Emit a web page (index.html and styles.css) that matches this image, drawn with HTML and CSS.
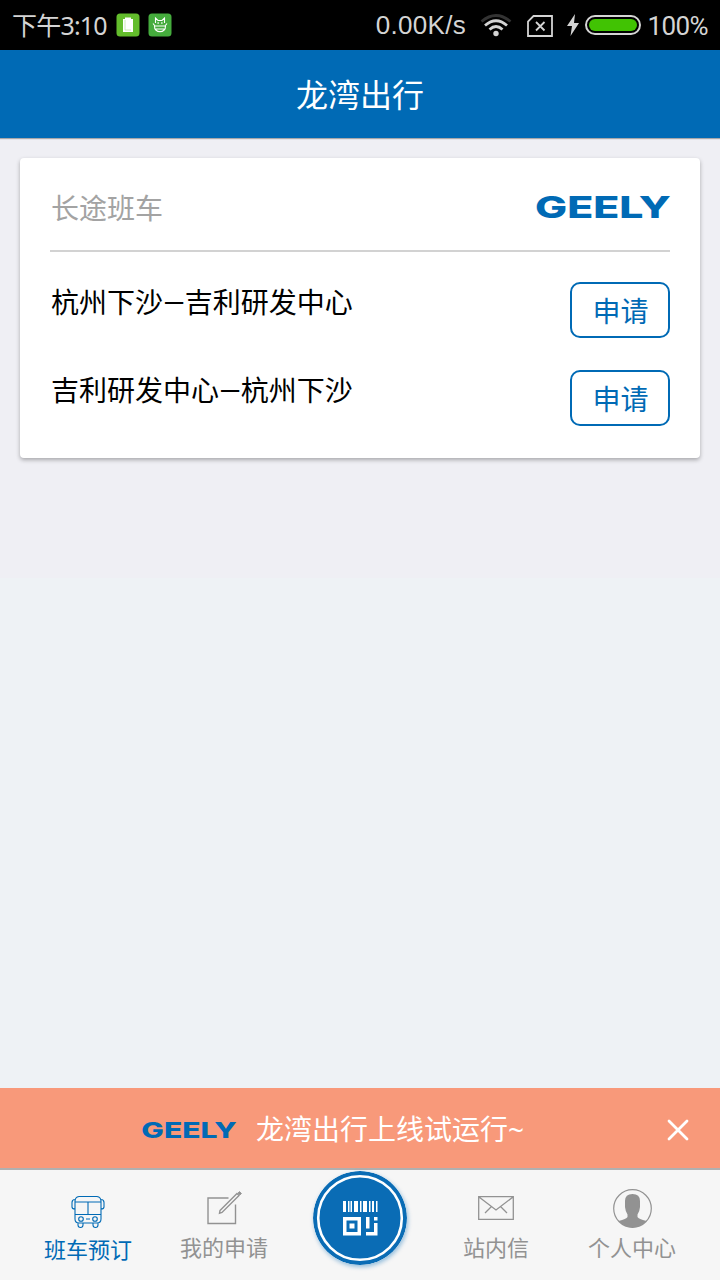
FILE: index.html
```
<!DOCTYPE html><html lang="zh-CN"><head><meta charset="utf-8"/>
<meta name="viewport" content="width=device-width, initial-scale=1.0"/>
<meta name="format-detection" content="telephone=no"/>
<title>龙湾出行</title>
<link rel="stylesheet" href="styles.css">
</head>
<body>

<div class="status">
  <span class="time">下午3:10</span>
  <svg class="app" width="24" height="24" viewBox="0 0 24 24">
    <rect x="0.5" y="0.5" width="23" height="23" rx="3.5" fill="#63bd2c"/>
    <path d="M7 6h2V4.500h6V6h2v13H7z" fill="#fff"/>
    <path d="M9 7v10h6" fill="none" stroke="#bfe5a6" stroke-width="0.8"/>
  </svg>
  <svg class="app" width="24" height="24" viewBox="0 0 24 24">
    <rect x="0.5" y="0.5" width="23" height="23" rx="3.5" fill="#45ac3d"/>
    <path d="M7.500 10V5l2.500 2.500h4L16.500 5v5M5 10.500l2 2.500h10l2-2.500M6.500 13c-.5 7.500 11.500 7.500 11 0M8 16h8" fill="none" stroke="#fff" stroke-width="1.100"/>
    <path d="M9.500 10h1.300M13.200 10h1.300" stroke="#fff" stroke-width="1.300"/>
  </svg>
  <span class="speed">0.00K/s</span>
  <svg class="wifi" width="32" height="24" viewBox="0 0 32 24">
    <g fill="none" stroke-width="2.800">
      <path d="M1.500 7.500Q16-4.500 30.500 7.500" stroke="#333"/>
      <path d="M5 11.500Q16 2 27 11.500M9.500 15.500Q16 9.500 22.500 15.500" stroke="#d4d4d4"/>
    </g>
    <circle cx="16" cy="19.500" r="2.700" fill="#d4d4d4"/>
  </svg>
  <svg class="sim" width="26" height="22" viewBox="0 0 26 22">
    <path d="M6.500 1H25v20H1V6.500zM9 7l8.500 8.500M17.500 7L9 15.500" fill="none" stroke="#d4d4d4" stroke-width="1.800"/>
  </svg>
  <svg class="bolt" width="12" height="22" viewBox="0 0 12 22">
    <path d="M8 0L0 12h5L3.500 22 12 9H7z" fill="#d4d4d4"/>
  </svg>
  <span class="battery"></span>
  <span class="percent">100%</span>
</div>

<h1 class="title">龙湾出行</h1>

<div class="content">
  <div class="card">
    <div class="cardhead">
      <span>长途班车</span>
      <svg class="logo" width="134" height="24" viewBox="0 0 134 24"><text x="-1" y="23" textLength="136" lengthAdjust="spacingAndGlyphs">GEELY</text></svg>
    </div>
    <div class="route">
      <span>杭州下沙—吉利研发中心</span>
      <button class="apply">申请</button>
    </div>
    <div class="route">
      <span>吉利研发中心—杭州下沙</span>
      <button class="apply">申请</button>
    </div>
  </div>
</div>

<div class="notice">
  <svg class="logo" width="94" height="17" viewBox="0 0 134 24"><text x="-1" y="23" textLength="136" lengthAdjust="spacingAndGlyphs">GEELY</text></svg>
  <span>龙湾出行上线试运行<span class="tilde">~</span></span>
  <svg class="close" width="22" height="22" viewBox="0 0 22 22">
    <path d="M2 2l18 18M20 2L2 20" stroke="#fff" stroke-width="2.800" stroke-linecap="round"/>
  </svg>
</div>

<div class="tabs">
  <div class="tab active">
    <svg width="34" height="34" viewBox="0 0 34 34" fill="none" stroke="currentColor" stroke-width="1.100">
      <path d="M8 1.500h18q4 .5 4 5V24q0 4-4 4H8q-4 0-4-4V6.500q0-4.500 4-5zM4 7h26M4 19.500h26M17 7v12.500M4 4.500q-3 0-3 3V12q0 2 3 2M30 4.500q3 0 3 3V12q0 2-3 2M7 28v2q0 2.500 2.500 2.500T12 30v-2M22 28v2q0 2.500 2.500 2.500T27 30v-2M15 24h4"/>
      <circle cx="10" cy="24" r="2.300"/>
      <circle cx="24" cy="24" r="2.300"/>
    </svg>
    <span>班车预订</span>
  </div>
  <div class="tab">
    <svg width="36" height="36" viewBox="0 0 36 36" fill="none" stroke="currentColor" stroke-width="1.400">
      <path d="M22.500 8H2V33.500H29.500V14.500"/>
      <path d="M14 20.500L31 3.500l2 2L16 22.500l-2.500 .8z"/>
      <path d="M32 3l1.500-1.500 2 2L34 5z" fill="currentColor" stroke-width="0.800"/>
    </svg>
    <span>我的申请</span>
  </div>
  <div class="tab">
    <svg class="scan" width="94" height="94" viewBox="0 0 94 94">
      <circle cx="47" cy="47" r="47" fill="#0a6cb5"/>
      <circle cx="47" cy="47" r="41.800" fill="none" stroke="#fff" stroke-width="2.600"/>
      <g fill="#fff">
        <path d="M30 30h3v11h-3zM35 30h1.500v11H35zM37.500 30H39v11h-1.500zM41 30h4v11h-4zM47 30h1.500v11H47zM50 30h4v11h-4zM56 30h1.500v11H56zM59 30h2v11h-2zM63 30h1.500v11H63z"/>
        <path d="M30 46h18v18.500H30zM33.500 49.500v11.500h11V49.500z" fill-rule="evenodd"/>
        <path d="M36.500 52.500h5v5h-5zM53 46h3.500v11.500H53zM61 46h3.500v3.500H61zM61 52h3.500v12.500H53V61h8z"/>
      </g>
    </svg>
  </div>
  <div class="tab">
    <svg width="36" height="36" viewBox="0 0 36 36" fill="none" stroke="currentColor" stroke-width="1.300">
      <path d="M.7 6.700h34.600v22.600H.7zM1 7l17 13L35 7M13.500 16.500L7 23M22.500 16.500L29 23"/>
    </svg>
    <span>站内信</span>
  </div>
  <div class="tab">
    <svg class="user" width="39" height="39" viewBox="0 0 39 39">
      <circle cx="19.500" cy="19.500" r="18.800" fill="none" stroke="currentColor" stroke-width="1.200"/>
      <path d="M12 12q0-7 7.500-7T27 12v6q-.5 5-2.500 7.500V28q1 2 9 4-6 6.500-14 6.500T5.500 32q8-2 9-4v-2.500Q12.500 23 12 18z" fill="currentColor"/>
    </svg>
    <span>个人中心</span>
  </div>
</div>

</body>
</html>
```

FILE: styles.css
```
body {
  margin: 0;
  height: 1280px;
  display: flex;
  flex-direction: column;
  overflow: hidden;
  font-family: Roboto, "Noto Sans CJK SC", sans-serif;
  font-size: 28px;
  background-color: #eef2f5;
  --main-color: #006ab5;
}
svg {
  display: block;
  flex: none;
}
.status {
  height: 50px;
  display: flex;
  align-items: center;
  box-sizing: border-box;
  padding: 0 12px;
  background-color: #000;
  color: #d4d4d4;
  font-size: 26px;
  white-space: nowrap;
}
.time {
  width: 105px;
  padding-bottom: 2px;
  font-family: "Noto Sans", "Noto Sans CJK SC", sans-serif;
  font-size: 25px;
  letter-spacing: -.8px;
}
.app {
  margin-right: 8px;
}
.speed {
  width: 105px;
  margin-left: 196px;
  font-family: "Liberation Sans", sans-serif;
  letter-spacing: .3px;
}
.wifi {
  margin-top: 2px;
}
.sim {
  margin: 2px 0 0 15px;
}
.bolt {
  margin-left: 14px;
}
.battery {
  width: 48px;
  height: 12px;
  flex: none;
  margin: 0 7px 0 6px;
  border: 2px solid #d4d4d4;
  border-radius: 11px;
  padding: 2px;
  background-color: #41c303;
  background-clip: content-box;
}
.percent {
  padding-top: 2px;
  letter-spacing: -.6px;
}
.title {
  position: relative;
  height: 88px;
  line-height: 92px;
  margin: 0;
  background-color: var(--main-color);
  color: #fff;
  font-size: 32px;
  font-weight: 400;
  text-align: center;
  box-shadow: 0 1px 1px rgba(0, 0, 0, .3);
}
.content {
  height: 440px;
  box-sizing: border-box;
  padding: 20px;
  background-color: #efeff4;
}
.card {
  height: 300px;
  box-sizing: border-box;
  padding: 0 30px;
  border-radius: 4px;
  background-color: #fff;
  box-shadow: 0 2px 4px rgba(0, 0, 0, .3);
}
.cardhead {
  height: 92px;
  display: flex;
  align-items: center;
  justify-content: space-between;
  border-bottom: 2px solid #d2d2d2;
  margin-bottom: 14px;
  color: #a3a3a3;
}
.cardhead span {
  padding: 5px 0 0 1px;
}
.cardhead .logo {
  margin-top: 6px;
}
.logo {
  overflow: visible;
  fill: var(--main-color);
}
.logo text {
  font-family: Inter, sans-serif;
  font-size: 30px;
  font-weight: 800;
}
.route {
  height: 88px;
  display: flex;
  align-items: center;
  justify-content: space-between;
  color: #000;
}
.route span {
  padding: 0 0 18px 1px;
}
.apply {
  width: 100px;
  height: 56px;
  padding: 0 0 0 1px;
  border: 2px solid var(--main-color);
  border-radius: 10px;
  background-color: #fff;
  color: var(--main-color);
  font: inherit;
}
.notice {
  height: 80px;
  display: flex;
  align-items: center;
  box-sizing: border-box;
  margin-top: auto;
  padding: 0 31px 0 142px;
  background-color: #f8997a;
  color: #fff;
}
.notice .logo {
  margin: 4px 20px 0 0;
}
.tilde {
  font-family: "Noto Sans", sans-serif;
  line-height: 1;
}
.close {
  margin: 4px 0 0 auto;
}
.tabs {
  height: 112px;
  display: flex;
  box-sizing: border-box;
  padding: 0 20px;
  border-top: 2px solid #b0b0b0;
  background-color: #f6f6f6;
  color: #929292;
  font-size: 22px;
}
.tab {
  flex: 1;
  display: flex;
  flex-direction: column;
  align-items: center;
  padding-top: 20px;
}
.tab span {
  line-height: 32px;
  margin-top: 7px;
}
.active {
  color: var(--main-color);
  padding-top: 25px;
}
.active span {
  margin-top: 6px;
}
.tab .scan {
  margin-top: -19px;
  border-radius: 50%;
  box-shadow: 1px 2px 4px rgba(0, 106, 181, .4);
}
.tab .user {
  margin: -1px 0 -2px;
}
```
